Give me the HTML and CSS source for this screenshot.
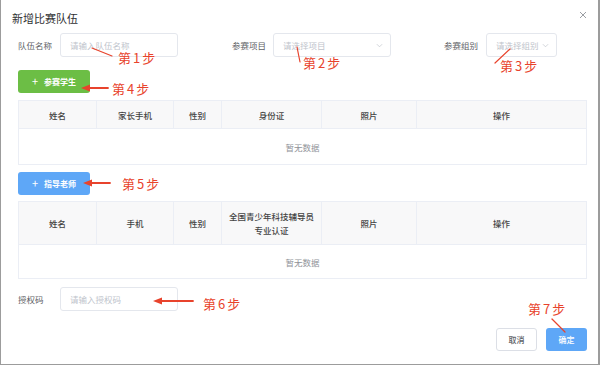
FILE: index.html
```html
<!DOCTYPE html>
<html lang="zh-CN">
<head>
    <meta charset="UTF-8">
    <meta name="viewport" content="width=device-width, initial-scale=1.0">
    <title>新增比赛队伍</title>
    <link rel="stylesheet" href="styles.css">
</head>
<body>
    <div class="dialog">
        <div class="dialog-header">
            <div class="dialog-title">新增比赛队伍</div>
            <svg class="dialog-close" viewBox="0 0 8 8"><path d="M1 1L7 7M7 1L1 7" stroke="#909399" stroke-width="0.9" fill="none"/></svg>
        </div>
        <div class="dialog-body">
            <div class="form-row">
                <div class="field">
                    <label class="field-label">队伍名称</label>
                    <div class="input name-input"><span class="placeholder">请输入队伍名称</span></div>
                </div>
                <div class="field field-project">
                    <label class="field-label">参赛项目</label>
                    <div class="input select project-select">
                        <span class="placeholder">请选择项目</span>
                        <svg class="chevron" viewBox="0 0 8 5"><polyline points="1,1 4,4 7,1" fill="none" stroke="#c0c4cc" stroke-width="0.8"/></svg>
                    </div>
                </div>
                <div class="field field-group">
                    <label class="field-label">参赛组别</label>
                    <div class="input select group-select">
                        <span class="placeholder">请选择组别</span>
                        <svg class="chevron" viewBox="0 0 8 5"><polyline points="1,1 4,4 7,1" fill="none" stroke="#c0c4cc" stroke-width="0.8"/></svg>
                    </div>
                </div>
            </div>

            <div class="btn btn-add btn-green"><span class="plus">+</span>参赛学生</div>
            <table class="data-table">
                <colgroup>
                    <col style="width:78px"><col style="width:77px"><col style="width:48px">
                    <col style="width:100px"><col style="width:95px"><col style="width:170px">
                </colgroup>
                <thead>
                    <tr class="head-short">
                        <th>姓名</th><th>家长手机</th><th>性别</th><th>身份证</th><th>照片</th><th>操作</th>
                    </tr>
                </thead>
                <tbody>
                    <tr class="empty-row"><td colspan="6">暂无数据</td></tr>
                </tbody>
            </table>

            <div class="btn btn-add btn-blue"><span class="plus">+</span>指导老师</div>
            <table class="data-table">
                <colgroup>
                    <col style="width:78px"><col style="width:77px"><col style="width:48px">
                    <col style="width:100px"><col style="width:95px"><col style="width:170px">
                </colgroup>
                <thead>
                    <tr class="head-tall">
                        <th>姓名</th><th>手机</th><th>性别</th><th>全国青少年科技辅导员<br>专业认证</th><th>照片</th><th>操作</th>
                    </tr>
                </thead>
                <tbody>
                    <tr class="empty-row short"><td colspan="6">暂无数据</td></tr>
                </tbody>
            </table>

            <div class="form-row auth-row">
                <div class="field">
                    <label class="field-label">授权码</label>
                    <div class="input name-input"><span class="placeholder">请输入授权码</span></div>
                </div>
            </div>
        </div>
        <div class="dialog-footer">
            <div class="btn btn-plain">取消</div>
            <div class="btn btn-primary">确定</div>
        </div>
    </div>

    <!-- step annotations drawn on top of the screenshot -->
    <div class="notes">
        <svg class="note-lines" width="600" height="365" viewBox="0 0 600 365">
            <g stroke="#e8432c" fill="#e8432c" stroke-linecap="round">
                <line x1="92" y1="48" x2="112" y2="56" stroke-width="1.2"/>
                <line x1="297" y1="47" x2="300" y2="62" stroke-width="1.2"/>
                <line x1="510" y1="49" x2="495" y2="63" stroke-width="1.2"/>
                <line x1="552" y1="319" x2="565" y2="332" stroke-width="1.2"/>

                <line x1="108" y1="88" x2="88" y2="88" stroke-width="1.8"/>
                <polygon points="81,88 90,84.5 90,91.5" stroke="none"/>
                <line x1="110" y1="183" x2="90" y2="183" stroke-width="1.8"/>
                <polygon points="83,183 92,179.5 92,186.5" stroke="none"/>
                <line x1="193" y1="301" x2="160" y2="301" stroke-width="1.8"/>
                <polygon points="153,301 162,297.5 162,304.5" stroke="none"/>
            </g>
        </svg>
        <span class="note note-1">第1步</span>
        <span class="note note-2">第2步</span>
        <span class="note note-3">第3步</span>
        <span class="note note-4">第4步</span>
        <span class="note note-5">第5步</span>
        <span class="note note-6">第6步</span>
        <span class="note note-7">第7步</span>
    </div>
</body>
</html>
```

FILE: styles.css
```css
html, body {
    margin: 0;
    padding: 0;
    width: 600px;
    height: 365px;
    overflow: hidden;
    background-color: #9c9c9c;
    font-family: "Noto Sans CJK SC", "Noto Sans", sans-serif;
}
.dialog {
    margin-left: 1px;
    width: 597px;
    height: 364px;
    background-color: #fff;
    box-sizing: border-box;
}
.dialog-header {
    display: flex;
    justify-content: space-between;
    align-items: center;
    height: 16px;
    padding: 10px 11px 0 11px;
}
.dialog-title {
    font-size: 11px;
    line-height: 16px;
    color: #303133;
}
.dialog-close {
    width: 8px;
    height: 8px;
    margin-top: -6px;
}
.dialog-body {
    padding: 7px 11px 0 17px;
}
.form-row {
    display: flex;
    align-items: center;
    height: 24px;
}
.field {
    display: flex;
    align-items: center;
}
.field-label {
    font-size: 8.5px;
    color: #606266;
    margin-right: 8px;
    width: 34px;
    white-space: nowrap;
}
.field-project {
    margin-left: 54px;
}
.field-project .field-label {
    margin-right: 7px;
}
.field-group {
    margin-left: 53px;
}
.input {
    display: flex;
    align-items: center;
    height: 24px;
    box-sizing: border-box;
    border: 1px solid #e4e7ed;
    border-radius: 3px;
    padding-left: 9px;
    font-size: 8.5px;
}
.placeholder {
    color: #c0c4cc;
    white-space: nowrap;
}
.name-input, .project-select {
    width: 118px;
}
.group-select {
    width: 71px;
}
.select {
    justify-content: space-between;
    padding-right: 7px;
}
.chevron {
    width: 7px;
    height: 5px;
}
.btn {
    display: flex;
    align-items: center;
    justify-content: center;
    box-sizing: border-box;
    height: 23px;
    border-radius: 3px;
    font-size: 8px;
    font-weight: 700;
}
.btn-add {
    width: 72px;
    color: #fff;
}
.plus {
    font-size: 11px;
    font-weight: 400;
    margin-right: 6px;
    margin-top: -1px;
}
.btn-green {
    margin-top: 13px;
    background-color: #6cbe45;
}
.btn-blue {
    margin-top: 7px;
    background-color: #5ea7f7;
}
.data-table {
    width: 568px;
    table-layout: fixed;
    border-collapse: collapse;
    border: 1px solid #ebeef5;
    margin-top: 7px;
}
.btn-blue + .data-table {
    margin-top: 6px;
}
.data-table th {
    background-color: #f8f8f9;
    border-right: 1px solid #ebeef5;
    border-bottom: 1px solid #ebeef5;
    font-size: 8.5px;
    font-weight: 500;
    color: #444;
    line-height: 14px;
    padding: 0;
}
.data-table th:last-child {
    border-right: none;
}
.head-short th {
    height: 27px;
}
.head-tall th {
    height: 42px;
}
.empty-row td {
    height: 35px;
    text-align: center;
    font-size: 8.5px;
    color: #909399;
    padding: 0;
}
.empty-row.short td {
    height: 33px;
}
.auth-row {
    margin-top: 8px;
}
.dialog-footer {
    display: flex;
    justify-content: flex-end;
    gap: 9px;
    padding: 17px 11px 0 0;
}
.btn-plain, .btn-primary {
    width: 41px;
    font-weight: 500;
}
.btn-plain {
    border: 1px solid #dcdfe6;
    color: #606266;
    background-color: #fff;
}
.btn-primary {
    background-color: #5ea7f7;
    color: #fff;
}
.notes {
    position: absolute;
    left: 0;
    top: 0;
    width: 600px;
    height: 365px;
    pointer-events: none;
}
.note-lines {
    position: absolute;
    left: 0;
    top: 0;
}
.note {
    position: absolute;
    font-size: 13px;
    line-height: 13px;
    letter-spacing: 2px;
    color: #e8432c;
    white-space: nowrap;
}
.note-1 { left: 118px; top: 51px; }
.note-2 { left: 303px; top: 56px; }
.note-3 { left: 500px; top: 59px; }
.note-4 { left: 112px; top: 82px; }
.note-5 { left: 122px; top: 177px; }
.note-6 { left: 203px; top: 297px; }
.note-7 { left: 528px; top: 302px; }
```
